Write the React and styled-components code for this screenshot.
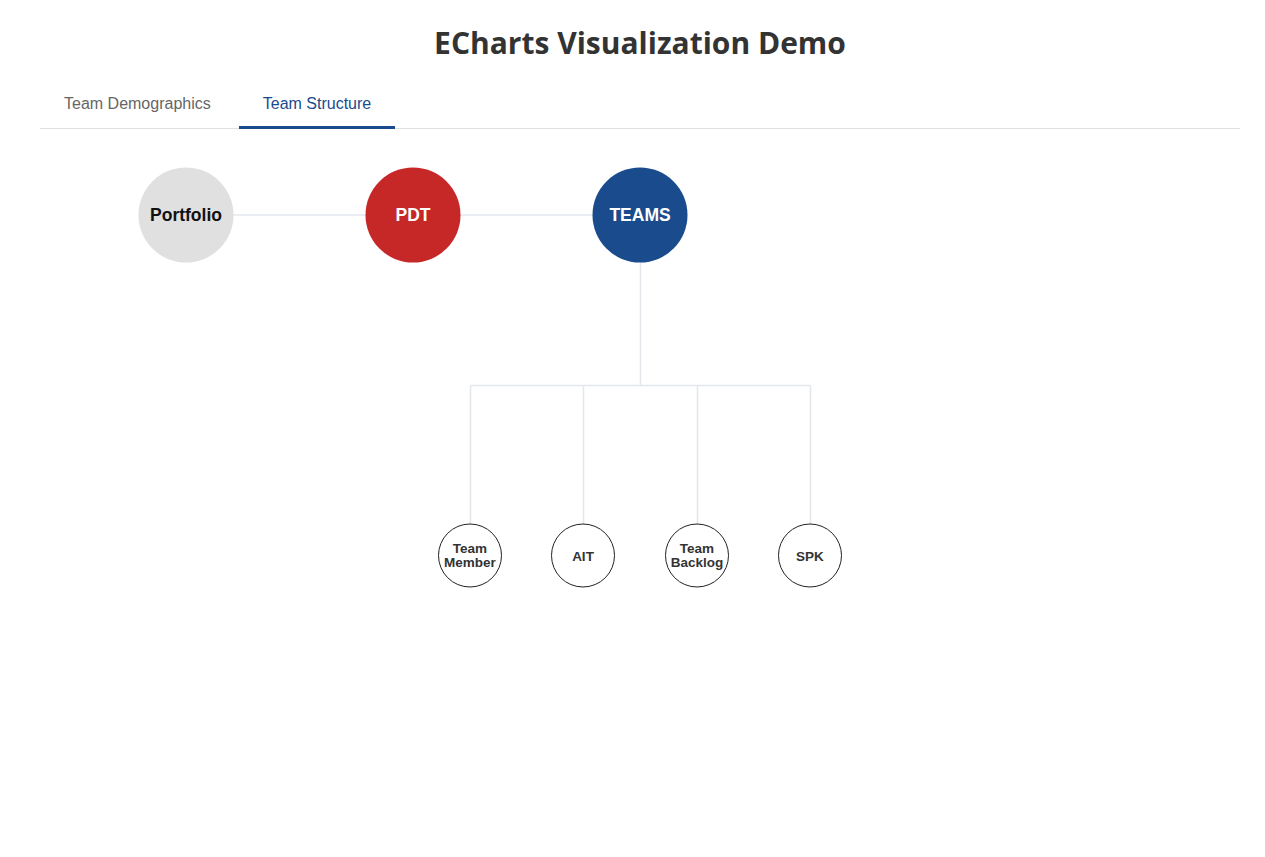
import { useState } from 'react'
import styled, { createGlobalStyle } from 'styled-components'

const OX = 40
const OY = 129

const topNodes = [
  { name: 'Portfolio', x: 186, fill: '#e0e0e0', color: '#111' },
  { name: 'PDT', x: 413, fill: '#c62828', color: '#fff' },
  { name: 'TEAMS', x: 640, fill: '#1a4b8c', color: '#fff' },
]

const children = [
  { lines: ['Team', 'Member'], x: 470 },
  { lines: ['AIT'], x: 583 },
  { lines: ['Team', 'Backlog'], x: 697 },
  { lines: ['SPK'], x: 810 },
]

export default function App() {
  const [tab, setTab] = useState('structure')

  return (
    <Page>
      <GlobalStyle />
      <Title>ECharts Visualization Demo</Title>
      <Tabs>
        <Tab active={tab === 'demo'} onClick={() => setTab('demo')}>Team Demographics</Tab>
        <Tab active={tab === 'structure'} onClick={() => setTab('structure')}>Team Structure</Tab>
      </Tabs>
      <Chart>
        <svg width="1200" height="600" viewBox={`${OX} ${OY} 1200 600`}>
          <g stroke="#e3e7ec" strokeWidth="1.5" fill="none">
            <line x1="186" y1="215" x2="640" y2="215" />
            <path d="M640.5 262 V385.5 M470.5 385.5 H810.5 M470.5 385.5 V524 M583.5 385.5 V524 M697.5 385.5 V524 M810.5 385.5 V524" />
          </g>
          {topNodes.map(n => (
            <g key={n.name}>
              <circle cx={n.x} cy="215" r="47.5" fill={n.fill} />
              <text x={n.x} y="221" textAnchor="middle" fill={n.color}
                fontFamily="Liberation Sans, Arial, sans-serif" fontWeight="700" fontSize="17.5">{n.name}</text>
            </g>
          ))}
          {children.map(c => (
            <g key={c.x}>
              <circle cx={c.x} cy="555.5" r="31.5" fill="#fff" stroke="#222" strokeWidth="1" />
              {c.lines.length === 1 ? (
                <text x={c.x} y="560.5" textAnchor="middle" fill="#333"
                  fontFamily="Liberation Sans, Arial, sans-serif" fontWeight="700" fontSize="13.5">{c.lines[0]}</text>
              ) : (
                <text textAnchor="middle" fill="#333"
                  fontFamily="Liberation Sans, Arial, sans-serif" fontWeight="700" fontSize="13.5">
                  <tspan x={c.x} y="553">{c.lines[0]}</tspan>
                  <tspan x={c.x} y="567">{c.lines[1]}</tspan>
                </text>
              )}
            </g>
          ))}
        </svg>
      </Chart>
    </Page>
  )
}

const GlobalStyle = createGlobalStyle`
  body {
    margin: 0;
    background: #fff;
    font-family: "Liberation Sans", Arial, sans-serif;
  }
`

const Page = styled.div`
  padding: 0 25px 0 40px;
`

const Title = styled.h1`
  margin: 23px 0 0;
  text-align: center;
  font-family: "Open Sans", "Noto Sans", sans-serif;
  font-size: 30px;
  font-weight: 700;
  color: #333;
  line-height: 40px;
`

const Tabs = styled.div`
  display: flex;
  gap: 4px;
  margin-top: 22px;
  border-bottom: 1px solid #e0e0e0;
`

const Tab = styled.div`
  padding: 10px 24px 13px;
  font-size: 16px;
  line-height: 18px;
  color: ${props => props.active ? '#1a4b8c' : '#666'};
  border-bottom: 3px solid ${props => props.active ? '#1a4b8c' : 'transparent'};
  margin-bottom: -1px;
  cursor: pointer;
  user-select: none;
`

const Chart = styled.div`
  width: 1200px;
  height: 600px;

  svg {
    display: block;
  }
`
